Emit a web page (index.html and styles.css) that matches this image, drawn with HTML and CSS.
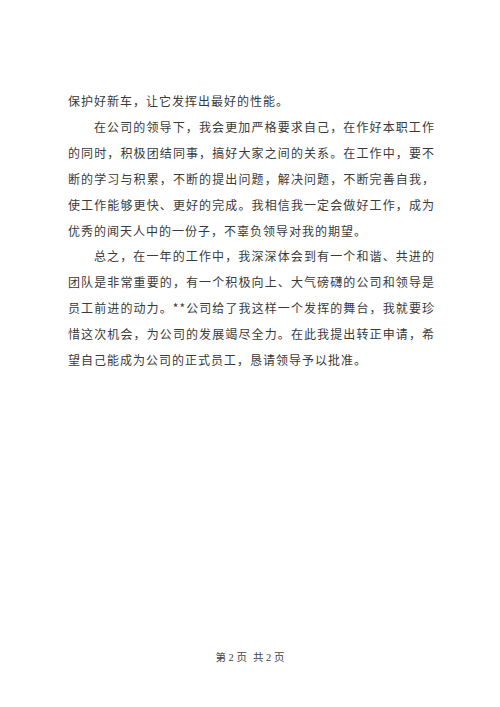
FILE: index.html
```html
<!DOCTYPE html>
<html>
<head>
    <title>转正申请</title>
    <link rel="stylesheet" href="styles.css">
</head>
<body>
    <div class="page">
        <div class="content">
            <p class="cont">保护好新车，让它发挥出最好的性能。</p>
            <p>在公司的领导下，我会更加严格要求自己，在作好本职工作的同时，积极团结同事，搞好大家之间的关系。在工作中，要不断的学习与积累，不断的提出问题，解决问题，不断完善自我，使工作能够更快、更好的完成。我相信我一定会做好工作，成为优秀的闻天人中的一份子，不辜负领导对我的期望。</p>
            <p>总之，在一年的工作中，我深深体会到有一个和谐、共进的团队是非常重要的，有一个积极向上、大气磅礴的公司和领导是员工前进的动力。**公司给了我这样一个发挥的舞台，我就要珍惜这次机会，为公司的发展竭尽全力。在此我提出转正申请，希望自己能成为公司的正式员工，恳请领导予以批准。</p>
        </div>
        <div class="footer"><span>第 2 页</span><span>共 2 页</span></div>
    </div>
</body>
</html>
```

FILE: styles.css
```css
body {
    margin: 0;
    background: #fff;
}

.page {
    width: 500px;
    height: 707px;
    display: flex;
    flex-direction: column;
    box-sizing: border-box;
    padding: 88px 0 42px 68px;
}

.content {
    width: 367px;
    font-family: "Noto Sans CJK SC", sans-serif;
    font-size: 12px;
    letter-spacing: 1px;
    line-height: 25.9px;
    color: #3a3a3a;
}

.content p {
    margin: 0;
    text-indent: 26px;
    text-align: justify;
}

.content p.cont { text-indent: 0; }

.footer {
    margin-top: auto;
    margin-left: -68px;
    display: flex;
    justify-content: center;
    gap: 6px;
    font-family: "Liberation Serif", "Noto Sans CJK SC", serif;
    font-size: 10.5px;
    line-height: 14px;
    color: #444;
}
```
